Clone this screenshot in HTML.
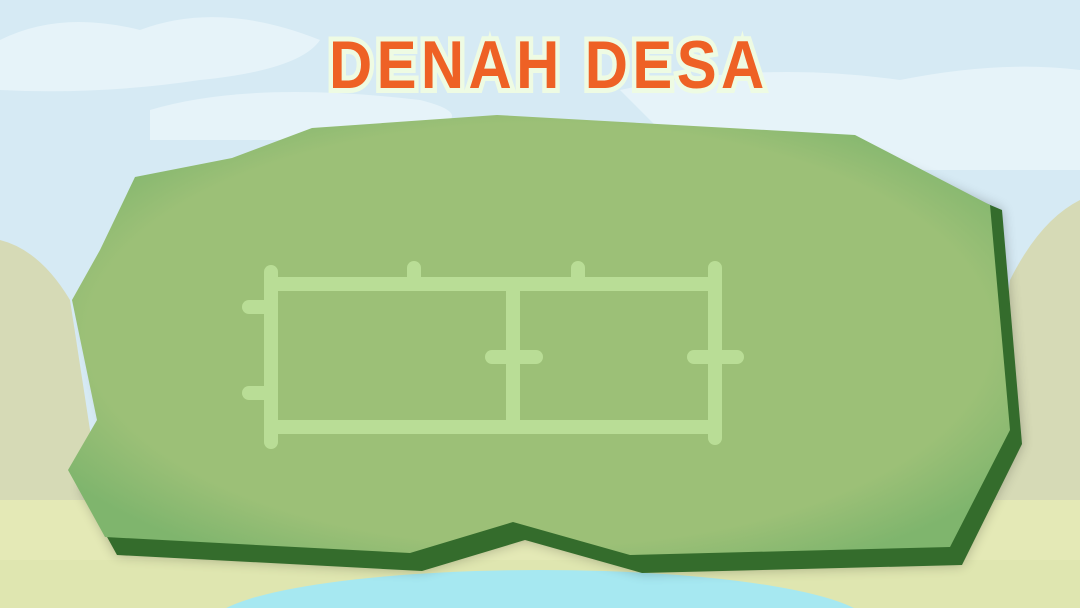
<!DOCTYPE html>
<html><head><meta charset="utf-8"><style>
html,body{margin:0;padding:0;width:1080px;height:608px;overflow:hidden;background:#d6eaf4}
svg{position:absolute;left:0;top:0}
.t{position:absolute;left:0;width:1080px;top:26px;height:80px;text-align:center;font-family:"Liberation Sans",sans-serif;font-weight:bold;font-size:68px;letter-spacing:5px;color:#ee6125;-webkit-text-stroke:10px #eefbe3;paint-order:stroke fill;transform:scaleX(0.88) translateX(10px);transform-origin:540px 0;overflow:hidden}
</style></head><body>
<svg width="1080" height="608" viewBox="0 0 1080 608">
<defs>
<radialGradient id="g" cx="50%" cy="50%" r="60%"><stop offset="80%" stop-color="#9cc077"/><stop offset="100%" stop-color="#7fb56d"/></radialGradient>
<filter id="b"><feGaussianBlur stdDeviation="6"/></filter>
</defs>
<rect width="1080" height="608" fill="#d6eaf4"/>
<path d="M0 40 Q60 10 140 30 Q220 0 320 40 Q300 70 200 80 Q100 95 0 90Z" fill="#e6f3f9"/>
<path d="M150 110 Q250 80 420 100 Q500 120 380 140 L150 140Z" fill="#e6f3f9"/>
<path d="M620 90 Q760 60 900 80 Q1000 60 1080 70 L1080 170 L700 170Z" fill="#e6f3f9"/>
<path d="M0 240 Q40 250 70 300 L110 560 L0 560Z" fill="#d6dab6"/>
<path d="M1080 200 Q1040 220 1010 280 L980 560 L1080 560Z" fill="#d6dab6"/>
<rect x="0" y="500" width="1080" height="108" fill="#e4e9b6"/>
<rect x="0" y="560" width="1080" height="48" fill="#dfe6b0"/>
<ellipse cx="540" cy="625" rx="330" ry="55" fill="#a6e8f1"/>
<polygon points="147,195 244,176 324,146 509,133 867,153 1002,210 1022,444 962,565 642,573 525,540 422,571 117,555 80,488 109,438 84,318 112,268" fill="#000" opacity=".25" filter="url(#b)"/>
<polygon points="147,195 244,176 324,146 509,133 867,153 1002,210 1022,444 962,565 642,573 525,540 422,571 117,555 80,488 109,438 84,318 112,268" fill="#346c2c"/>
<polygon points="135,177 232,158 312,128 497,115 855,135 990,205 1010,430 950,547 630,555 513,522 410,553 105,537 68,470 97,420 72,300 100,250" fill="url(#g)"/>
<g stroke="#b9dd96" stroke-width="14" stroke-linecap="round" fill="none">
<rect x="271" y="284" width="444" height="143" />
<line x1="513" y1="284" x2="513" y2="427"/>
<line x1="271" y1="272" x2="271" y2="442"/>
<line x1="715" y1="268" x2="715" y2="438"/>
<line x1="414" y1="268" x2="414" y2="284"/>
<line x1="578" y1="268" x2="578" y2="284"/>
<line x1="249" y1="307" x2="271" y2="307"/>
<line x1="249" y1="393" x2="271" y2="393"/>
<line x1="492" y1="357" x2="536" y2="357"/>
<line x1="694" y1="357" x2="737" y2="357"/>
</g>
</svg>
<div class="t">DENAH DESA</div>
</body></html>
